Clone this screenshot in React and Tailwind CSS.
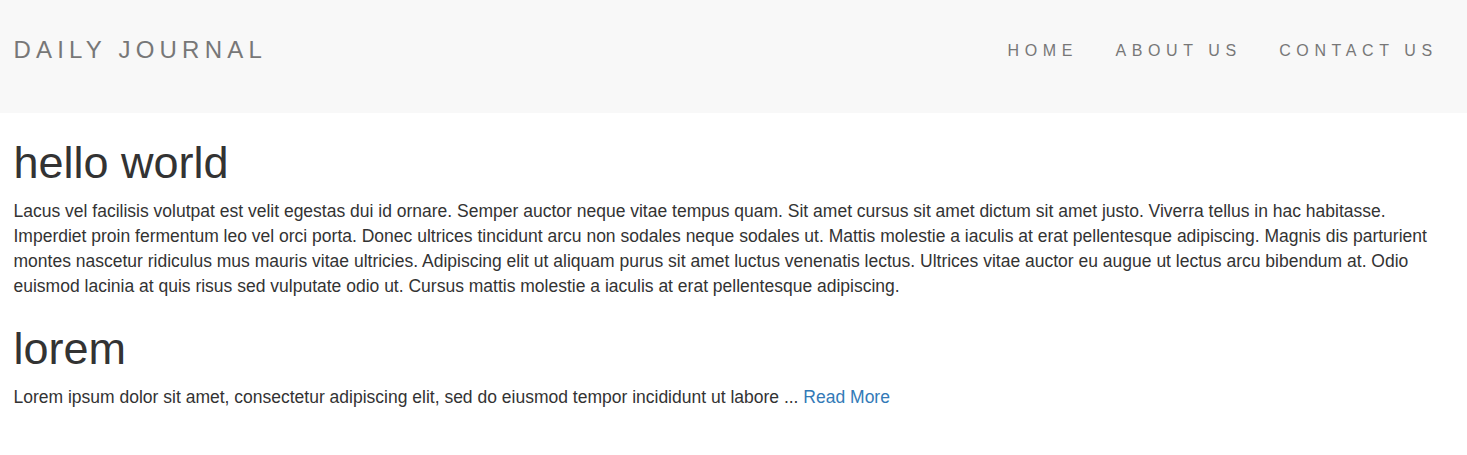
const navLinks = ["HOME", "ABOUT US", "CONTACT US"];

const posts = [
  {
    title: "hello world",
    body: "Lacus vel facilisis volutpat est velit egestas dui id ornare. Semper auctor neque vitae tempus quam. Sit amet cursus sit amet dictum sit amet justo. Viverra tellus in hac habitasse. Imperdiet proin fermentum leo vel orci porta. Donec ultrices tincidunt arcu non sodales neque sodales ut. Mattis molestie a iaculis at erat pellentesque adipiscing. Magnis dis parturient montes nascetur ridiculus mus mauris vitae ultricies. Adipiscing elit ut aliquam purus sit amet luctus venenatis lectus. Ultrices vitae auctor eu augue ut lectus arcu bibendum at. Odio euismod lacinia at quis risus sed vulputate odio ut. Cursus mattis molestie a iaculis at erat pellentesque adipiscing.",
  },
  {
    title: "lorem",
    body: "Lorem ipsum dolor sit amet, consectetur adipiscing elit, sed do eiusmod tempor incididunt ut labore ...",
    more: true,
  },
];

const App = () => {
  return (
    <div className="min-h-[455px] bg-white font-['Liberation_Sans',Arial,sans-serif] text-[#333]">
      {/* NAVBAR */}
      <nav className="h-[113px] bg-[#f8f8f8] pt-[25px]">
        <div className="flex h-[50px] items-center justify-between pl-[13.5px] pr-[10.5px]">
          <a className="text-[24px] tracking-[5.2px] text-[#777]">DAILY JOURNAL</a>
          <ul className="flex pt-[2px]">
            {navLinks.map((l) => (
              <li key={l}>
                <a className="px-[18.75px] text-[16px] tracking-[5.6px] text-[#777]">{l}</a>
              </li>
            ))}
          </ul>
        </div>
      </nav>

      {/* POSTS */}
      <div className="px-[13.5px]">
        {posts.map((p) => (
          <div key={p.title}>
            <h1 className="mt-[25px] mb-[11.5px] text-[45px] leading-[1.1]">{p.title}</h1>
            <p className="text-[17.5px] leading-[25px]">
              {p.body}
              {p.more && (
                <>
                  {" "}
                  <a className="text-[#337ab7]">Read More</a>
                </>
              )}
            </p>
          </div>
        ))}
      </div>
    </div>
  );
};

export default App;
